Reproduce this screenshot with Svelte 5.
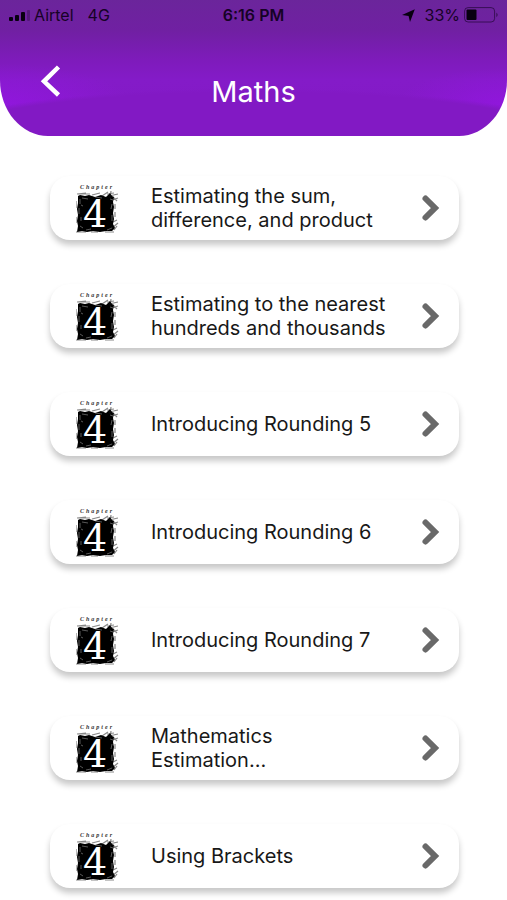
<script>
    const chapters = [
        "Estimating the sum, difference, and product",
        "Estimating to the nearest hundreds and thousands",
        "Introducing Rounding 5",
        "Introducing Rounding 6",
        "Introducing Rounding 7",
        "Mathematics Estimation...",
        "Using Brackets"
    ];
</script>

<div class="screen">
    <header>
        <div class="status">
            <div class="carrier">
                <svg width="22" height="12" viewBox="0 0 22 12" aria-hidden="true">
                    <rect x="1" y="8" width="4" height="4" rx="1" />
                    <rect x="7" y="6" width="4" height="6" rx="1" />
                    <rect x="13" y="3" width="4" height="9" rx="1" />
                    <rect x="19" y="1" width="3" height="11" rx="1" opacity=".25" />
                </svg>
                <span>Airtel</span>
                <span class="network">4G</span>
            </div>
            <span class="time">6:16 PM</span>
            <div class="power">
                <svg class="location" width="13" height="13" viewBox="0 0 13 13" aria-hidden="true">
                    <path d="M12.8.2 8 13 6.6 6.9 0 5.9Z" />
                </svg>
                <span>33%</span>
                <svg width="35" height="16" viewBox="0 0 35 16" aria-hidden="true">
                    <rect x=".6" y=".6" width="30" height="14.4" rx="3.5" fill="none" stroke="#160226" stroke-opacity=".6" />
                    <rect x="2.5" y="2.5" width="10" height="10.5" rx="1" />
                    <path d="M32.5 5.5q2 2.3 0 4.8Z" opacity=".7" />
                </svg>
            </div>
        </div>

        <div class="titlebar">
            <button class="back" aria-label="Back">
                <svg width="22" height="32" viewBox="0 0 22 32" aria-hidden="true">
                    <path d="M18.5 2 4 16.3 18.5 30" fill="none" stroke="#fff" stroke-width="4.5" />
                </svg>
            </button>
            <h1>Maths</h1>
        </div>
    </header>

    <main>
        {#each chapters as chapter}
            <a class="card" href="#chapter">
                <svg class="badge" width="46" height="56" viewBox="0 0 46 56" aria-hidden="true">
                    <text class="label" x="4" y="9">Chapter</text>
                    <!-- inked square with ragged edges -->
                    <path d="M2 16 4 15 9 16 13 15 19 17 25 15 30 17 34 13 36 16 38 17 37 22 38 27 37 33 38 39 37 44 39 48 36 51 30 51 24 52 17 51 11 52 6 51 1 52 2 46 1 41 2 35 1 29 2 23Z" />
                    <path
                        d="M1 14 10 13M4 14H14M16 15 24 13M26 16 32 12M31 14 38 13M35 11 34 18M33 16 42 14M36 20 42 18M37 17 41 21M39 24V29M39 32V37M37 42 41 40M36 48 42 43M38 50 41 46M0 21V28M0 37V43M0 52H10M15 52H22M29 52H38"
                        fill="none" stroke="#111" stroke-width="1.2" opacity=".5"
                    />
                    <path
                        d="M4 19V24M3 28V34M5 37V41M4 46 7 48M6 18 12 19M19 17 26 18M36 24 35 29M36 35V41M10 50 15 49M31 50 36 48M34 19 37 20M5 25 7 26"
                        fill="none" stroke="#ddd" stroke-width=".8" opacity=".5"
                    />
                    <text class="number" x="19" y="47">4</text>
                </svg>
                <span class="name">{chapter}</span>
                <svg class="chevron" width="20" height="28" viewBox="0 0 20 28" aria-hidden="true">
                    <path d="M4.5 4.5 14 14 4.5 23.5" fill="none" stroke="#696969" stroke-width="6" stroke-linecap="round" />
                </svg>
            </a>
        {/each}
    </main>
</div>

<style>
    :global(body) {
        margin: 0;
        background: #fff;
    }

    .screen {
        font-family: Inter, "Liberation Sans", sans-serif;
        color: #181818;
    }

    header {
        box-sizing: border-box;
        padding-bottom: 24px;
        border-radius: 0 0 48px 48px / 0 0 56px 56px;

        background:
            radial-gradient(ellipse 72% 64px at 50% 152px, #8219c4 94%, transparent),
            radial-gradient(ellipse 130px 40px at 0 104px, rgba(148, 22, 226, .8), transparent),
            radial-gradient(ellipse 110px 36px at 100% 104px, rgba(148, 22, 226, .8), transparent),
            linear-gradient(#6b259b 0, #7020a2 30px, #7e1bbb 60px, #841bc8 80px, #8219c4 100%);
    }

    .status {
        display: grid;
        grid-template-columns: 1fr auto 1fr;
        align-items: center;

        height: 30px;
        padding: 0 8px;

        font-size: 16px;
        color: #160226;
        fill: #080010;
    }

    .carrier,
    .power {
        display: flex;
        align-items: center;
        gap: 4px;
    }

    .power {
        justify-content: flex-end;
    }

    .network {
        margin-left: 10px;
    }

    .time {
        font-weight: 600;
    }

    .location {
        margin-right: 6px;
    }

    .titlebar {
        display: grid;
        grid-template-columns: 80px 1fr 80px;
        align-items: end;

        padding-top: 32px;
    }

    .back {
        justify-self: center;
        align-self: start;

        margin-left: 22px;
        padding: 3px 0 0;

        border: 0;
        background: none;
        cursor: pointer;
    }

    .back svg {
        display: block;
    }

    h1 {
        margin: 0;
        padding: 10px 0 0;

        font-size: 29px;
        font-weight: 400;
        line-height: 40px;
        text-align: center;
        color: #fff;
    }

    main {
        display: flex;
        flex-direction: column;
        gap: 44px;

        padding: 40px 48px 12px 50px;
    }

    .card {
        display: flex;
        align-items: center;

        box-sizing: border-box;
        min-height: 64px;
        padding: 0 18px 0 26px;
        border-radius: 20px;

        color: inherit;
        text-decoration: none;
        background: #fff;
        box-shadow: 0 5px 6px rgba(0, 0, 0, .22);
    }

    .badge,
    .chevron {
        flex: none;
    }

    .label {
        font: italic bold 6px "Liberation Serif", serif;
        letter-spacing: 2px;
        fill: #333;
    }

    .number {
        font: 38px "DejaVu Serif", serif;
        text-anchor: middle;
        fill: #fff;
    }

    .name {
        flex: 1;
        max-width: 240px;
        margin: 0 auto 0 29px;

        font-size: 20px;
        line-height: 24px;
    }
</style>
